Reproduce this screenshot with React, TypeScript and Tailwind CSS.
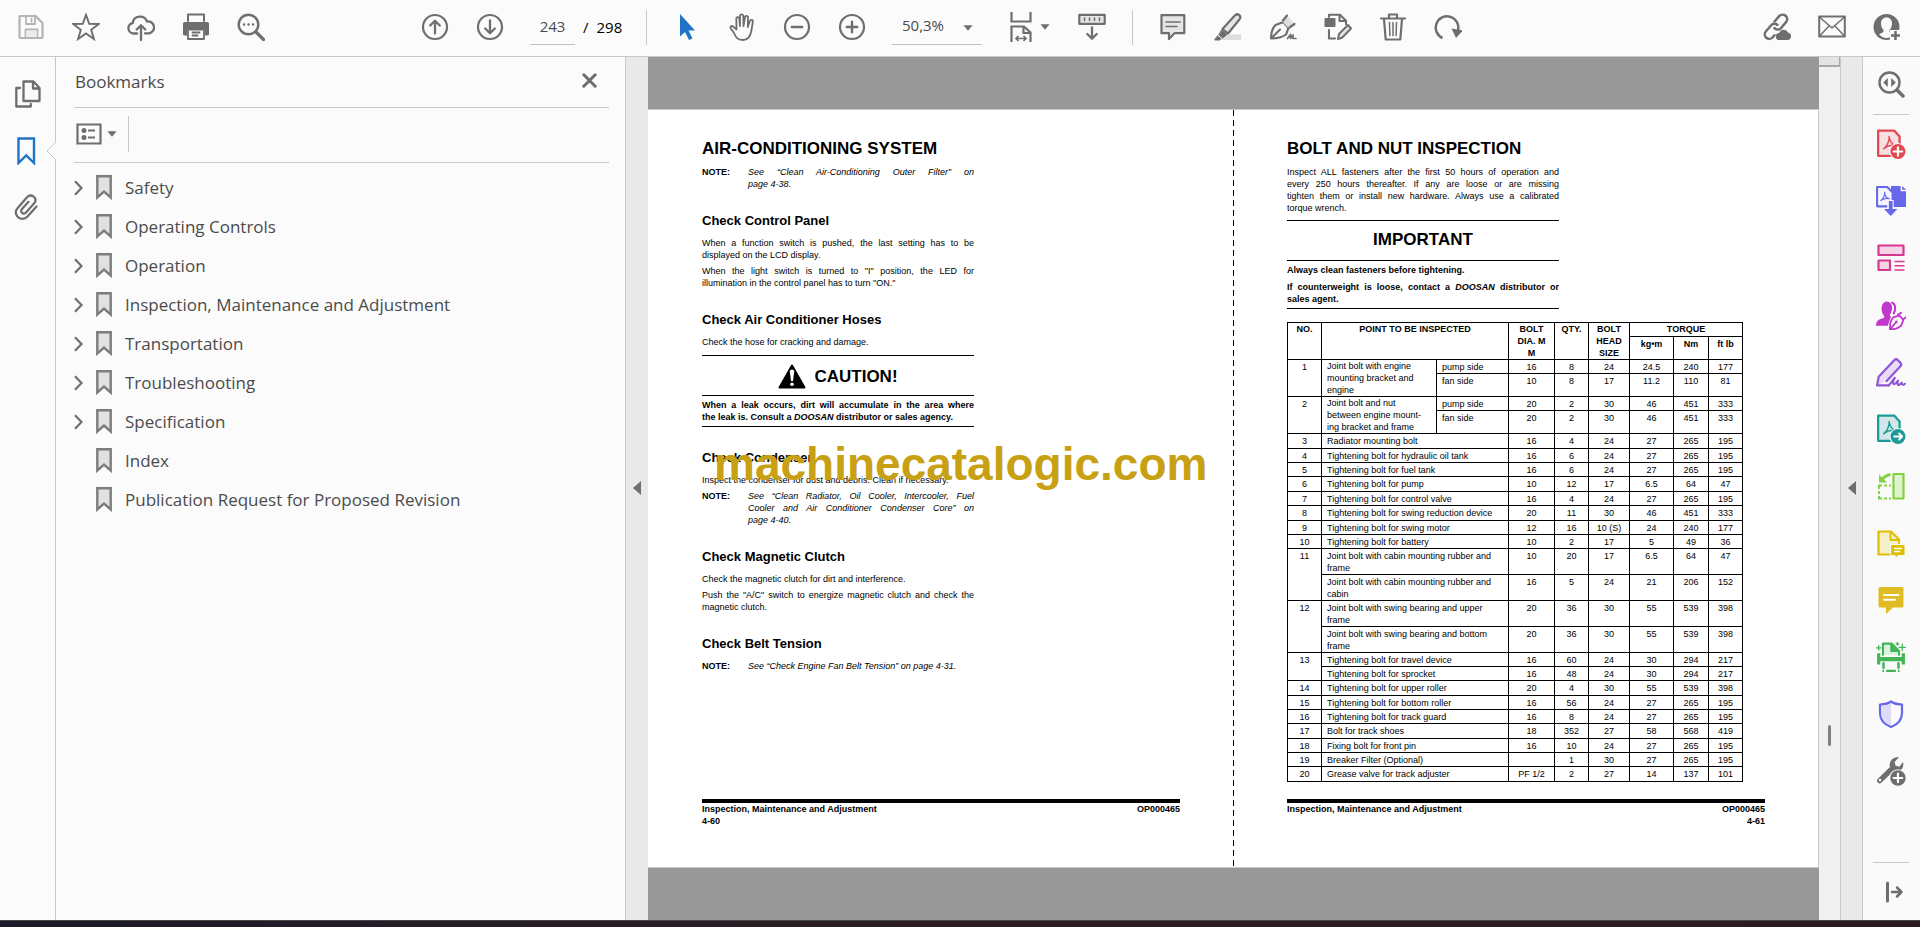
import React from 'react';
import type { ReactNode } from 'react';

type IconProps = { children: ReactNode; className?: string; size?: number };

function Icon({ children, className = 'text-[#6e6e6e]', size = 28 }: IconProps) {
  return (
    <svg
      width={size}
      height={size}
      viewBox="0 0 28 28"
      fill="none"
      stroke="currentColor"
      strokeWidth="2"
      strokeLinecap="round"
      strokeLinejoin="round"
      className={'shrink-0 ' + className}
      aria-hidden="true"
    >
      {children}
    </svg>
  );
}

/* ---------- toolbar icons ---------- */

const SaveIcon = () => (
  <Icon className="text-[#b4b4b4]">
    <path d="M3 3h15.500l7 7v14a1 1 0 0 1-1 1H3.500a1 1 0 0 1-1-1V3.500z" strokeWidth="2.200" />
    <path d="M9 3v8h9V3M14.500 5.500v3M8.500 25v-8.500h12V25" strokeWidth="1.800" />
    <path d="M9.500 17.500h10V24h-10z" fill="#ececec" stroke="none" />
  </Icon>
);
const StarIcon = () => (
  <Icon>
    <path d="M14 1.800l3.200 9 9.600.2-7.600 5.800 2.700 9.200-7.900-5.500L6.100 26l2.700-9.200L1.200 11l9.600-.2z" strokeWidth="1.900" strokeLinejoin="miter" />
  </Icon>
);
const CloudUpIcon = () => (
  <Icon>
    <path d="M10 20.500H6.500a5.300 5.300 0 0 1-.8-10.500A7.400 7.400 0 0 1 20 8.500a6 6 0 0 1 2 11.900H18" strokeWidth="2.300" />
    <path d="M14 27V12.500M9.700 16.500L14 12.200l4.300 4.300" strokeWidth="2.300" />
  </Icon>
);
const PrintIcon = () => (
  <Icon>
    <path d="M6 8V1.500h16V8" />
    <path d="M1 10.500A1.500 1.500 0 0 1 2.500 9h23a1.500 1.500 0 0 1 1.500 1.500V21a1.500 1.500 0 0 1-1.500 1.500H23V16H5v6.500H2.500A1.500 1.500 0 0 1 1 21z" fill="currentColor" stroke="none" />
    <path d="M6 16.500h16v9.500H6zM10.500 19.500h7M10.500 22.500h5" strokeWidth="1.800" />
  </Icon>
);
const FindIcon = () => (
  <Icon>
    <circle cx="11.500" cy="11.500" r="9.800" strokeWidth="2.400" />
    <path d="M19 19l7.500 7.500" strokeWidth="3.200" />
    <path d="M7 11.500h.1M11.500 11.500h.1M16 11.500h.1" strokeWidth="2.400" />
  </Icon>
);
const UpIcon = () => (
  <Icon>
    <circle cx="14" cy="14" r="12" strokeWidth="2.200" />
    <path d="M14 20.500V8M9.200 12.500L14 7.700l4.800 4.800" strokeWidth="2.300" />
  </Icon>
);
const DownIcon = () => (
  <Icon>
    <circle cx="14" cy="14" r="12" strokeWidth="2.200" />
    <path d="M14 7.500V20M9.200 15.500l4.800 4.800 4.800-4.800" strokeWidth="2.300" />
  </Icon>
);
const CursorIcon = () => (
  <Icon className="text-[#1f74c8]">
    <path d="M7 1l15 16.500h-6.500l4 8-3.500 1.500-4-8L7 23.500z" fill="currentColor" stroke="none" />
  </Icon>
);
const HandIcon = () => (
  <Icon>
    <path
      d="M8.500 16.500L8.300 5.600a1.500 1.500 0 0 1 3 0L12 13V3a1.600 1.600 0 0 1 3.300 0l.2 10L17 4.300a1.500 1.500 0 0 1 3 .3L19.800 14l2.100-6a1.500 1.500 0 0 1 2.900.8c-.4 2.900-.8 5.200-1.300 8.200C22.500 23.500 20 27 15 27c-6 0-7.500-3.500-9-7l-3.200-4.500c-1.300-2.300 1.300-3.200 2.700-1.700z"
      strokeWidth="1.800"
    />
  </Icon>
);
const MinusIcon = () => (
  <Icon>
    <circle cx="14" cy="14" r="12" strokeWidth="2.200" />
    <path d="M8.800 14h10.400" strokeWidth="2.400" />
  </Icon>
);
const PlusIcon = () => (
  <Icon>
    <circle cx="14" cy="14" r="12" strokeWidth="2.200" />
    <path d="M8.800 14h10.400M14 8.800v10.400" strokeWidth="2.400" />
  </Icon>
);
const FitIcon = () => (
  <svg width="22" height="30" viewBox="0 0 22 30" fill="none" stroke="#6e6e6e" strokeWidth="2.200" className="shrink-0" aria-hidden="true">
    <path d="M1.500 0v9.500h19V0" />
    <path d="M1.500 30V14.500H14l6.500 6V30M13.500 15v6h6.500" />
    <path d="M6 26.500h10M8.500 24L6 26.500 8.500 29M13.500 24l2.500 2.500-2.500 2.500" strokeWidth="1.700" />
  </svg>
);
const ScrollIcon = () => (
  <Icon>
    <path d="M1.300 1.800h25.400v9H1.300z" fill="#e6e6e6" strokeWidth="2.200" />
    <path d="M6.500 5v2.500M11.500 5v2.500M16.500 5v2.500M21.500 5v2.500" strokeWidth="1.600" />
    <path d="M14 14.500V25.500M9.300 21l4.700 4.700 4.700-4.700" strokeWidth="2.300" />
  </Icon>
);
const CommentIcon = () => (
  <Icon>
    <path d="M2.500 2.200h22.800v18H15.500L10 26v-5.800H2.500z" fill="#e6e6e6" strokeWidth="2.200" />
    <path d="M7 9h14M7 13.500h11" strokeWidth="1.700" />
  </Icon>
);
const HighlightIcon = () => (
  <Icon>
    <path d="M10 21.500h17V27H5z" fill="#dedede" stroke="none" />
    <path d="M8.500 16L20.800 2.600a3 3 0 0 1 4.800 3.600L14 20.500z" fill="#e6e6e6" strokeWidth="2.200" />
    <path d="M8 17l5 4.500-4.500 3.500-3.500-3zM3.800 23l2.800 2.500-.8 1.500H1z" fill="currentColor" strokeWidth="1" />
  </Icon>
);
const SignIcon = () => (
  <Icon>
    <path d="M2 25.500c0-5 1-10 4.500-13.500L14.500 9l5 6-2.500 6.500C13 24.500 7 25.500 2 25.500zM2.500 25l8.500-8.500" strokeWidth="2.100" />
    <path d="M13.500 8.500l4-6.500 8 8.500-6 4.500z" fill="#dedede" stroke="none" />
    <path d="M14 7.500l4-5M20.500 14.500L25.500 11" strokeWidth="2.200" />
    <path d="M18.500 25.500l3-4v4l2.500-3.500v3.500h3" strokeWidth="1.700" />
  </Icon>
);
const EditPdfIcon = () => (
  <Icon>
    <path d="M1.500 6h9v7h-9z" fill="currentColor" />
    <path d="M5 4V1.800h11l6 6v3.500M15.500 2v6h6M5 17v8.500h6" strokeWidth="2.100" />
    <path d="M14 26l1-5L24 12l3 3.500-9 9.300z" fill="#e6e6e6" strokeWidth="2" />
  </Icon>
);
const TrashIcon = () => (
  <Icon>
    <path d="M2 5.500h24M10 5V1.500h8V5M5 6l1.700 20.500h14.600L23 6" strokeWidth="2.200" />
    <path d="M10.500 9.500l.4 13M14 9.500v13M17.500 9.500l-.4 13" strokeWidth="1.500" />
  </Icon>
);
const RotateIcon = () => (
  <Icon>
    <path d="M8.500 25A11.300 11.300 0 1 1 24 17.500" strokeWidth="2.500" strokeLinecap="butt" />
    <path d="M17.500 15.500l11.500 2-7 7.500z" fill="currentColor" stroke="none" />
  </Icon>
);
const LinkCloudIcon = () => (
  <Icon>
    <path d="M11.500 8.500l4.700-5.300a4.500 4.500 0 0 1 6.800 6l-5.500 6.500a4.500 4.500 0 0 1-6-.5" strokeWidth="2.500" />
    <path d="M14.500 12a4.500 4.500 0 0 0-6.500.5L2.800 18.500A4.500 4.500 0 0 0 9.500 24.500l2-2.300" strokeWidth="2.500" />
    <path d="M16.500 27a3.500 3.500 0 0 1-.3-7 4.700 4.700 0 0 1 8.800-.5A3.800 3.800 0 0 1 24.800 27z" fill="currentColor" stroke="none" />
  </Icon>
);
const MailIcon = () => (
  <Icon>
    <path d="M1.200 3.500h25.600v20H1.200z" strokeWidth="2" />
    <path d="M2 4.500l12 10.500L26 4.500M2 22.500l9.300-9.700M26 22.500l-9.300-9.700" strokeWidth="1.500" />
  </Icon>
);
const AccountIcon = () => (
  <Icon>
    <circle cx="13.500" cy="14" r="13" fill="currentColor" stroke="none" />
    <path
      d="M13.500 4.500c3.500 0 5.500 2.500 5.500 6 0 2.700-1 5-2.500 6.500-.5 1.500.3 2.300 1.800 3l2.700 1.300c-2 2.400-4.500 3.700-7.500 3.700s-5.500-1.300-7.500-3.700L8.700 20c1.500-.7 2.300-1.500 1.800-3C9 15.500 8 13.200 8 10.500c0-3.500 2-6 5.500-6z"
      fill="#fbfbfb"
      stroke="none"
    />
    <path d="M17 17h11v11H17z" fill="#fbfbfb" stroke="none" />
    <path d="M22.500 18v9M18 22.500h9" strokeWidth="2.500" strokeLinecap="butt" />
  </Icon>
);

const Caret = () => (
  <svg width="10" height="6" viewBox="0 0 10 6" className="shrink-0" aria-hidden="true">
    <path d="M0.500 0.300h9L5 5.700z" fill="#6e6e6e" />
  </svg>
);

/* ---------- side rail icons ---------- */

const PagesIcon = () => (
  <Icon>
    <path d="M9.500 1.500h10l6 6.500v13h-16zM19 2v6.500h6" strokeWidth="2.300" />
    <path d="M6 8H2.300v18.500h14.500V24" strokeWidth="2.300" />
  </Icon>
);
const BookmarkIcon = () => (
  <Icon className="text-[#1f74c8]">
    <path d="M4.500 1.500h15.500v24.500l-7.750-7.500-7.750 7.500z" strokeWidth="2.400" strokeLinejoin="miter" />
  </Icon>
);
const ClipIcon = () => (
  <Icon>
    <path
      d="M22.500 12.500l-9 10a6.700 6.700 0 0 1-10.800-1c-1.500-2.600-1.200-5 .8-7.300L13 3.300c2-2 4.500-2.300 6.700-.6 2.200 1.900 2.200 4.500.5 6.600l-8.200 9.200c-1.200 1.300-2.800 1.500-4 .4-1.200-1.200-1-2.700 0-3.900l6.500-7.200"
      strokeWidth="2.200"
    />
  </Icon>
);

const AcrobatMark = () => (
  <path d="M7 18.500c3-1.500 5.500-7 5.300-11.500 0 4 3 8 6.200 8.500-3.500-.8-8 .3-11.500 3z" strokeWidth="1.300" />
);

const SearchToolIcon = () => (
  <Icon>
    <circle cx="12.500" cy="12.500" r="10" strokeWidth="2.400" />
    <path d="M20.500 20.500l5.500 5.500" strokeWidth="3.400" />
    <path d="M10.800 8v9l-4.600-4.500zM14.200 8v9l4.600-4.500z" fill="currentColor" stroke="none" />
  </Icon>
);
const CreatePdfIcon = () => (
  <Icon className="text-[#e34850]" size={30}>
    <path d="M2 1.500h15l5 5.500v18H2z" fill="#f8dfe0" strokeWidth="2.100" />
    <AcrobatMark />
    <circle cx="20.500" cy="21" r="8" fill="#fafafa" stroke="none" />
    <circle cx="20.500" cy="21" r="7" fill="currentColor" stroke="none" />
    <path d="M20.500 17v8M16.500 21h8" stroke="#fff" strokeWidth="2" />
  </Icon>
);
const ExportPdfIcon = () => (
  <Icon className="text-[#6767ec]" size={30}>
    <path d="M14 0h9v5h5v14.500H14z" fill="currentColor" stroke="none" />
    <path d="M24.500 0L28 3.500h-3.500z" fill="currentColor" stroke="none" />
    <path d="M1 1h9.500l5 5v13H1z" fill="#f4f4ff" strokeWidth="1.900" />
    <path d="M4.500 13.500c2-1 3.800-4.500 3.600-7.500 0 3 2 5.500 4.200 5.800-2.500-.5-5.500 0-7.800 1.700z" strokeWidth="1.100" />
    <path d="M10.500 13h6v8h5L13.500 29l-8-8h5z" fill="#fafafa" stroke="none" />
    <path d="M12 14h3.500v7.500H20L13.700 28l-6.200-6.500H12z" fill="currentColor" stroke="none" />
  </Icon>
);
const OrganizeIcon = () => (
  <Icon className="text-[#d83790]">
    <path d="M1.500 1.500h25V11h-25zM1.500 16.500H13V26H1.500z" fill="#f3d5e6" strokeWidth="2.200" />
    <path d="M18 17.500h9M18 21.700h9M18 26h9" strokeWidth="1.400" />
  </Icon>
);
const RequestSignIcon = () => (
  <Icon className="text-[#c038cc]" size={30}>
    <path d="M0 24c0-4 2-6 6.500-7 1.500-.4 1.600-1.500.7-2.600C4 10 4.500 2 10 1.500c5.500.3 6.300 6.500 3.500 11.500-.6 1.300-.8 2 .5 2.500L11 24z" fill="currentColor" stroke="none" />
    <path d="M15 2.500c3.500 1.500 3.500 6.500 1.500 10" strokeWidth="1.900" />
    <path d="M13 27.500c-.2-5.500 1-9.500 3.500-11.500l5.500-1.500 3.500 4-2 5.500c-3 2.500-6 3.500-10.500 3.500zm.5-.5l5-6" fill="#fafafa" strokeWidth="1.700" />
    <circle cx="19" cy="20.500" r="1.300" fill="currentColor" stroke="none" />
    <path d="M20.500 13.500l3-1.500M26 17.500l2-1.500" strokeWidth="1.700" />
  </Icon>
);
const FillSignIcon = () => (
  <Icon className="text-[#9256d9]" size={30}>
    <path d="M1 26.500l1.500-8L17 3a2.500 2.500 0 0 1 3.500 0l2.500 2.500a2.500 2.500 0 0 1 0 3L10 22.500z" fill="#e8dcf7" stroke="none" />
    <path d="M12 26.500H1l1.500-8L17 3a2.500 2.500 0 0 1 3.500 0l2.500 2.500a2.500 2.500 0 0 1 0 3L10 22.500" strokeWidth="2.100" />
    <path d="M12 26.500l5.500-7c-2.500 4-2 7.500 1 5l2-2.500c-1 3.500 0 5.500 2.500 3l1-1c0 2 1.500 2.500 3 1" strokeWidth="2" />
  </Icon>
);
const SharePdfIcon = () => (
  <Icon className="text-[#1c9a97]" size={30}>
    <path d="M2 1.500h15l5 5.500v18H2z" fill="#d2e8e8" strokeWidth="2.100" />
    <AcrobatMark />
    <circle cx="20.500" cy="21" r="8" fill="#fafafa" stroke="none" />
    <circle cx="20.500" cy="21" r="7" fill="currentColor" stroke="none" />
    <path d="M17 21h7M21.500 18l3 3-3 3" stroke="#fff" strokeWidth="1.700" />
  </Icon>
);
const CompareIcon = () => (
  <Icon className="text-[#83d143]">
    <path d="M16.500 2h10v24.500h-10z" fill="#e0f3d0" strokeWidth="2.200" />
    <path
      d="M2 17v-3.500h3M7 13.500h3M12 13.500h2M2 19v3M2 24v2.500h3M7 26.500h3M12 26.500h2"
      strokeWidth="2"
      strokeLinecap="butt"
      strokeLinejoin="miter"
    />
    <path d="M2 2.500V10.500h8z" fill="currentColor" stroke="none" />
    <path d="M5 7.500C7.500 4.500 10 3 13.500 2.500" strokeWidth="3" strokeLinecap="butt" />
  </Icon>
);
const SendCommentsIcon = () => (
  <Icon className="text-[#dfbf03]">
    <path d="M14 25.500H1.500v-23H14l8 8v3.500" fill="#f5efc8" strokeWidth="2.200" />
    <path d="M13.500 3v8h8" strokeWidth="2" />
    <path d="M14 15.500h14v11h-7L18.500 29l-.5-2.500h-4z" fill="currentColor" stroke="#fafafa" strokeWidth="1" />
    <path d="M17.500 19.500h7M17.500 22.500h5" stroke="#fff" strokeWidth="1.300" />
  </Icon>
);
const CommentToolIcon = () => (
  <Icon className="text-[#dfbb24]">
    <path d="M3 1h22a1.500 1.500 0 0 1 1.500 1.500V20a1.500 1.500 0 0 1-1.500 1.500h-9L9 28v-6.500H3A1.500 1.500 0 0 1 1.500 20V2.500A1.500 1.500 0 0 1 3 1z" fill="currentColor" stroke="none" />
    <path d="M7 9h14.500M7 13.800h11" stroke="#fff" strokeWidth="1.900" />
  </Icon>
);
const ScanIcon = () => (
  <Icon className="text-[#44b556]" size={30}>
    <path d="M6.500 12V1.500h8l7 7V12" fill="#dcf2df" strokeWidth="2" />
    <path d="M14 2v6.500h6.500" fill="#44b556" strokeWidth="1.500" />
    <path d="M1 10.500h3V14h20v-3.500h3V21h-3v-3H4v3H1z" fill="currentColor" stroke="none" />
    <path d="M7 19v6M21 19v6M9.500 27h9M6 27h1.500M20.500 27H22" strokeWidth="2.300" strokeLinecap="butt" />
    <path d="M2.500 3.500v4M.5 5.500h4M24.500 2v6M21.500 5h6M20 .5v2.500M18.800 1.700h2.500" strokeWidth="1.200" />
  </Icon>
);
const ShieldIcon = () => (
  <Icon className="text-[#6767ec]">
    <path d="M14 1.500c3.500 2.500 7 3 11 3V13c0 7-4.500 11.500-11 14C7.500 24.500 3 20 3 13V4.500c4 0 7.500-.5 11-3z" strokeWidth="2.200" />
    <path d="M14 3.200v22.300C8.300 23 4.300 19 4.300 13V5.700C8 5.600 11 5 14 3.200z" fill="#dcdcf8" stroke="none" />
  </Icon>
);
const MoreToolsIcon = () => (
  <Icon size={30}>
    <path d="M3.500 23L16 11" strokeWidth="5" />
    <path d="M21.500 1.200l-4.200 4.300 1 3.500 3.500 1 3.400-4.300c1.300 4.500-1.500 8.500-6 8.300-5 0-7.300-3.500-6.200-7.500 1-3.800 4.500-6 8.500-5.300z" fill="currentColor" stroke="none" />
    <circle cx="3.800" cy="22.500" r="1.200" fill="#fafafa" stroke="none" />
    <circle cx="20.500" cy="20.500" r="8.200" fill="#fafafa" stroke="none" />
    <circle cx="20.500" cy="20.500" r="7.200" fill="currentColor" stroke="none" />
    <path d="M20.500 16.500v8M16.500 20.500h8" stroke="#fff" strokeWidth="2" />
  </Icon>
);
const CollapseIcon = () => (
  <Icon>
    <path d="M10.500 5v18" strokeWidth="3" />
    <path d="M15 14h9M20 9.500l4.500 4.500-4.500 4.500" strokeWidth="2.500" />
  </Icon>
);

/* ---------- building blocks ---------- */

function ToolButton({ label, children }: { label: string; children: ReactNode }) {
  return (
    <button type="button" aria-label={label} className="flex h-11 w-[55px] shrink-0 items-center justify-center">
      {children}
    </button>
  );
}

function RailButton({ label, children }: { label: string; children: ReactNode }) {
  return (
    <button type="button" aria-label={label} className="flex h-[57px] w-full shrink-0 items-center justify-center">
      {children}
    </button>
  );
}

function Toolbar() {
  return (
    <header className="flex h-[57px] shrink-0 items-start border-b border-[#c8c8c8] bg-[#fbfbfb] pt-[5px] pr-1.5 pl-[3px] font-['Open_Sans','Noto_Sans',sans-serif] text-[15px]">
      <ToolButton label="Save"><SaveIcon /></ToolButton>
      <ToolButton label="Star"><StarIcon /></ToolButton>
      <ToolButton label="Upload"><CloudUpIcon /></ToolButton>
      <ToolButton label="Print"><PrintIcon /></ToolButton>
      <ToolButton label="Find"><FindIcon /></ToolButton>
      <div className="w-[129px] shrink-0" />
      <ToolButton label="Previous page"><UpIcon /></ToolButton>
      <ToolButton label="Next page"><DownIcon /></ToolButton>
      <input
        aria-label="Page number"
        defaultValue="243"
        className="ml-[13px] h-10 w-[45px] shrink-0 border-b border-[#c0c0c0] bg-transparent pt-0.5 text-center text-[#4b4b4b] outline-none"
      />
      <span className="ml-2 flex h-11 w-[63px] shrink-0 items-center gap-2 text-black">
        <span>/</span>
        <span>298</span>
      </span>
      <div className="mt-[5px] h-[35px] w-px shrink-0 bg-[#c8c8c8]" />
      <div className="w-3 shrink-0" />
      <ToolButton label="Select"><CursorIcon /></ToolButton>
      <ToolButton label="Pan"><HandIcon /></ToolButton>
      <ToolButton label="Zoom out"><MinusIcon /></ToolButton>
      <ToolButton label="Zoom in"><PlusIcon /></ToolButton>
      <div className="relative ml-[13px] h-10 w-[90px] shrink-0 border-b border-[#c0c0c0]">
        <select aria-label="Zoom level" className="h-full w-full appearance-none bg-transparent pt-0.5 pl-2.5 text-[#4b4b4b] outline-none">
          <option>50,3%</option>
        </select>
        <span className="pointer-events-none absolute top-[20px] right-[9px]">
          <Caret />
        </span>
      </div>
      <button type="button" aria-label="Fit page" className="flex h-11 w-[82px] shrink-0 items-center gap-2 pl-7">
        <FitIcon />
        <Caret />
      </button>
      <ToolButton label="Scrolling mode"><ScrollIcon /></ToolButton>
      <div className="mt-[5px] ml-[13px] h-[35px] w-px shrink-0 bg-[#c8c8c8]" />
      <div className="w-3 shrink-0" />
      <ToolButton label="Comment"><CommentIcon /></ToolButton>
      <ToolButton label="Highlight"><HighlightIcon /></ToolButton>
      <ToolButton label="Sign"><SignIcon /></ToolButton>
      <ToolButton label="Edit"><EditPdfIcon /></ToolButton>
      <ToolButton label="Delete"><TrashIcon /></ToolButton>
      <ToolButton label="Rotate"><RotateIcon /></ToolButton>
      <div className="ml-auto flex">
        <ToolButton label="Share link"><LinkCloudIcon /></ToolButton>
        <ToolButton label="Send by email"><MailIcon /></ToolButton>
        <ToolButton label="Account"><AccountIcon /></ToolButton>
      </div>
    </header>
  );
}

const bookmarks = [
  { title: 'Safety', open: true },
  { title: 'Operating Controls', open: true },
  { title: 'Operation', open: true },
  { title: 'Inspection, Maintenance and Adjustment', open: true },
  { title: 'Transportation', open: true },
  { title: 'Troubleshooting', open: true },
  { title: 'Specification', open: true },
  { title: 'Index', open: false },
  { title: 'Publication Request for Proposed Revision', open: false },
];

function LeftRail() {
  return (
    <nav className="relative flex w-14 shrink-0 flex-col border-r border-[#c8c8c8] bg-[#fbfbfb] pt-2">
      <RailButton label="Page thumbnails"><PagesIcon /></RailButton>
      <RailButton label="Bookmarks"><BookmarkIcon /></RailButton>
      <RailButton label="Attachments"><ClipIcon /></RailButton>
      <svg className="absolute top-[84px] -right-px" width="10" height="20" viewBox="0 0 10 20" aria-hidden="true">
        <path d="M10 1v18L1 10z" fill="#fbfbfb" />
        <path d="M9.500 0.500v1L1 10l8.500 8.500v1" fill="none" stroke="#c8c8c8" />
      </svg>
    </nav>
  );
}

function BookmarksPanel() {
  return (
    <aside className="flex w-[570px] shrink-0 flex-col border-r border-[#c8c8c8] bg-[#fbfbfb] pr-4 pl-[18px] font-['Open_Sans','Noto_Sans',sans-serif] text-[17px] text-[#4b4b4b]">
      <div className="flex h-[51px] items-start justify-between border-b border-[#c8c8c8] pt-[13px] pr-3 pl-px">
        <h1 className="leading-6">Bookmarks</h1>
        <button type="button" aria-label="Close" className="pt-[3px]">
          <svg width="15" height="15" viewBox="0 0 15 15" stroke="#6e6e6e" strokeWidth="3" strokeLinecap="round" aria-hidden="true">
            <path d="M1.800 1.800l11.400 11.400M13.200 1.800L1.800 13.200" />
          </svg>
        </button>
      </div>
      <div className="flex h-[55px] items-start border-b border-[#c8c8c8] pt-2">
        <button type="button" aria-label="Options" className="flex h-9 w-[55px] items-center gap-[5px] border-r border-[#c8c8c8] pl-0.5">
          <svg width="26" height="22" viewBox="0 0 26 22" fill="none" stroke="#6e6e6e" aria-hidden="true">
            <path d="M1.500 1.500h23v19h-23z" strokeWidth="2.200" />
            <path d="M12 7.500h7M12 14.500h7" strokeWidth="2" />
            <circle cx="8" cy="7.500" r="2.500" fill="#6e6e6e" stroke="none" />
            <circle cx="8" cy="14.500" r="2.500" fill="#6e6e6e" stroke="none" />
          </svg>
          <Caret />
        </button>
      </div>
      <ul className="pt-[5px]">
        {bookmarks.map((b) => (
          <li key={b.title} className="flex h-[39px] items-center">
            <span className="flex w-[22px] shrink-0">
              {b.open && (
                <svg width="9" height="16" viewBox="0 0 9 16" fill="none" stroke="#6e6e6e" strokeWidth="2.200" aria-hidden="true">
                  <path d="M1 1.200L7.500 8 1 14.800" />
                </svg>
              )}
            </span>
            <svg width="16" height="25" viewBox="0 0 16 25" fill="#e1e1e1" stroke="#7c7c7c" strokeWidth="2.400" className="shrink-0" aria-hidden="true">
              <path d="M1.300 1.300h13.400v21.200L8 16.500l-6.700 6z" />
            </svg>
            <a href="#bookmark" className="ml-[13px]">{b.title}</a>
          </li>
        ))}
      </ul>
    </aside>
  );
}

function Lines({ rows, className = '' }: { rows: string[]; className?: string }) {
  return (
    <p className={className}>
      {rows.map((r, i) => (
        <span key={r} className={'block whitespace-nowrap ' + (i < rows.length - 1 ? '[text-align-last:justify]' : '')}>
          {r}
        </span>
      ))}
    </p>
  );
}

function Note({ rows }: { rows: string[] }) {
  return (
    <div className="flex">
      <strong className="w-[46px] shrink-0">NOTE:</strong>
      <Lines rows={rows} className="flex-1 italic" />
    </div>
  );
}

function Section({ title, children }: { title: string; children: ReactNode }) {
  return (
    <section className="mt-[21px]">
      <h3 className="mb-1.5 text-[13px] leading-5 font-bold">{title}</h3>
      <div className="flex flex-col gap-1">{children}</div>
    </section>
  );
}

function Footer({ number, right }: { number: string; right?: boolean }) {
  return (
    <footer className="mt-auto border-t-4 border-black font-bold">
      <div className="flex justify-between">
        <span>Inspection, Maintenance and Adjustment</span>
        <span>OP000465</span>
      </div>
      <div className={right ? 'text-right' : ''}>{number}</div>
    </footer>
  );
}

function LeftPage() {
  return (
    <article className="flex flex-col pt-[27px] pr-[53px] pb-10 pl-[54px]">
      <div className="w-[272px]">
        <h2 className="mb-[5px] text-[17px] leading-6 font-bold whitespace-nowrap">AIR-CONDITIONING SYSTEM</h2>
        <Note rows={['See “Clean Air-Conditioning Outer Filter” on', 'page 4-38.']} />
        <Section title="Check Control Panel">
          <Lines rows={['When a function switch is pushed, the last setting has to be', 'displayed on the LCD display.']} />
          <Lines rows={['When the light switch is turned to "I" position, the LED for', 'illumination in the control panel has to turn "ON."']} />
        </Section>
        <Section title="Check Air Conditioner Hoses">
          <p>Check the hose for cracking and damage.</p>
        </Section>
        <div className="mt-[7px] border-b border-black pb-[3px] font-bold">
          <div className="flex h-[41px] items-center justify-center gap-2 border-y border-black pt-0.5 text-[17px]">
            <svg width="28" height="25" viewBox="0 0 28 25" aria-hidden="true">
              <path d="M14 1.500L26.500 23.500h-25z" stroke="#000" strokeWidth="2" strokeLinejoin="round" />
              <path d="M11.800 7.500c0-2.800 4.400-2.800 4.400 0L15 17h-2z" fill="#fff" />
              <circle cx="14" cy="20.300" r="1.800" fill="#fff" />
            </svg>
            CAUTION!
          </div>
          <div className="pt-[3px] whitespace-nowrap">
            <p className="[text-align-last:justify]">When a leak occurs, dirt will accumulate in the area where</p>
            <p>
              the leak is. Consult a <em>DOOSAN</em> distributor or sales agency.
            </p>
          </div>
        </div>
        <Section title="Check Condenser">
          <p>Inspect the condenser for dust and debris. Clean if necessary.</p>
          <Note
            rows={[
              'See “Clean Radiator, Oil Cooler, Intercooler, Fuel',
              'Cooler and Air Conditioner Condenser Core” on',
              'page 4-40.',
            ]}
          />
        </Section>
        <Section title="Check Magnetic Clutch">
          <p>Check the magnetic clutch for dirt and interference.</p>
          <Lines rows={['Push the "A/C" switch to energize magnetic clutch and check the', 'magnetic clutch.']} />
        </Section>
        <Section title="Check Belt Tension">
          <Note rows={['See “Check Engine Fan Belt Tension” on page 4-31.']} />
        </Section>
      </div>
      <Footer number="4-60" />
    </article>
  );
}

type Row = {
  no?: string;
  noSpan?: number;
  point?: string[];
  pointSpan?: number;
  side?: string;
  values: string[];
  height: string;
};

const H14 = 'h-[14px]';
const H15 = 'h-[15px]';
const H23 = 'h-[23px]';
const H26 = 'h-[26px]';

const rows: Row[] = [
  { no: '1', noSpan: 2, point: ['Joint bolt with engine', 'mounting bracket and', 'engine'], pointSpan: 2, side: 'pump side', values: ['16', '8', '24', '24.5', '240', '177'], height: H14 },
  { side: 'fan side', values: ['10', '8', '17', '11.2', '110', '81'], height: H23 },
  { no: '2', noSpan: 2, point: ['Joint bolt and nut', 'between engine mount-', 'ing bracket and frame'], pointSpan: 2, side: 'pump side', values: ['20', '2', '30', '46', '451', '333'], height: H14 },
  { side: 'fan side', values: ['20', '2', '30', '46', '451', '333'], height: H23 },
  { no: '3', point: ['Radiator mounting bolt'], values: ['16', '4', '24', '27', '265', '195'], height: H15 },
  { no: '4', point: ['Tightening bolt for hydraulic oil tank'], values: ['16', '6', '24', '27', '265', '195'], height: H14 },
  { no: '5', point: ['Tightening bolt for fuel tank'], values: ['16', '6', '24', '27', '265', '195'], height: H14 },
  { no: '6', point: ['Tightening bolt for pump'], values: ['10', '12', '17', '6.5', '64', '47'], height: H15 },
  { no: '7', point: ['Tightening bolt for control valve'], values: ['16', '4', '24', '27', '265', '195'], height: H14 },
  { no: '8', point: ['Tightening bolt for swing reduction device'], values: ['20', '11', '30', '46', '451', '333'], height: H15 },
  { no: '9', point: ['Tightening bolt for swing motor'], values: ['12', '16', '10 (S)', '24', '240', '177'], height: H14 },
  { no: '10', point: ['Tightening bolt for battery'], values: ['10', '2', '17', '5', '49', '36'], height: H14 },
  { no: '11', noSpan: 2, point: ['Joint bolt with cabin mounting rubber and', 'frame'], values: ['10', '20', '17', '6.5', '64', '47'], height: H26 },
  { point: ['Joint bolt with cabin mounting rubber and', 'cabin'], values: ['16', '5', '24', '21', '206', '152'], height: H26 },
  { no: '12', noSpan: 2, point: ['Joint bolt with swing bearing and upper', 'frame'], values: ['20', '36', '30', '55', '539', '398'], height: H26 },
  { point: ['Joint bolt with swing bearing and bottom', 'frame'], values: ['20', '36', '30', '55', '539', '398'], height: H26 },
  { no: '13', noSpan: 2, point: ['Tightening bolt for travel device'], values: ['16', '60', '24', '30', '294', '217'], height: H14 },
  { point: ['Tightening bolt for sprocket'], values: ['16', '48', '24', '30', '294', '217'], height: H14 },
  { no: '14', point: ['Tightening bolt for upper roller'], values: ['20', '4', '30', '55', '539', '398'], height: H15 },
  { no: '15', point: ['Tightening bolt for bottom roller'], values: ['16', '56', '24', '27', '265', '195'], height: H14 },
  { no: '16', point: ['Tightening bolt for track guard'], values: ['16', '8', '24', '27', '265', '195'], height: H14 },
  { no: '17', point: ['Bolt for track shoes'], values: ['18', '352', '27', '58', '568', '419'], height: H15 },
  { no: '18', point: ['Fixing bolt for front pin'], values: ['16', '10', '24', '27', '265', '195'], height: H14 },
  { no: '19', point: ['Breaker Filter (Optional)'], values: ['', '1', '30', '27', '265', '195'], height: H14 },
  { no: '20', point: ['Grease valve for track adjuster'], values: ['PF 1/2', '2', '27', '14', '137', '101'], height: H15 },
];

const edge = 'border-r border-b border-black align-top';
const cell = edge + ' px-0 pt-px pb-0';
const head = edge + ' p-0 font-bold';
const subhead = edge + ' px-0 pt-px pb-0 font-bold';

function TorqueTable() {
  return (
    <table className="mt-[13px] w-[456px] table-fixed border-separate border-spacing-0 border-t border-l border-black text-center whitespace-nowrap">
      <colgroup>
        <col className="w-[34px]" />
        <col className="w-[115px]" />
        <col className="w-[72px]" />
        <col className="w-[46px]" />
        <col className="w-[34px]" />
        <col className="w-[41px]" />
        <col className="w-[44px]" />
        <col className="w-[35px]" />
        <col className="w-[34px]" />
      </colgroup>
      <thead>
        <tr className="h-[14px]">
          <th rowSpan={2} className={head}>NO.</th>
          <th rowSpan={2} colSpan={2} className={head}>POINT TO BE INSPECTED</th>
          <th rowSpan={2} className={head}>BOLT<br />DIA. M<br />M</th>
          <th rowSpan={2} className={head}>QTY.</th>
          <th rowSpan={2} className={head}>BOLT<br />HEAD<br />SIZE</th>
          <th colSpan={3} className={head}>TORQUE</th>
        </tr>
        <tr className="h-[23px]">
          <th className={subhead}>kg•m</th>
          <th className={subhead}>Nm</th>
          <th className={subhead}>ft lb</th>
        </tr>
      </thead>
      <tbody>
        {rows.map((r, i) => (
          <tr key={i} className={r.height}>
            {r.no && <td rowSpan={r.noSpan ?? 1} className={cell}>{r.no}</td>}
            {r.point && (
              <td
                rowSpan={r.pointSpan ?? 1}
                colSpan={r.side ? 1 : 2}
                className={edge + ' pr-0 pb-0 pl-[5px] text-left ' + (r.side ? 'pt-0' : 'pt-px')}
              >
                {r.point.map((line) => (
                  <span key={line} className="block">{line}</span>
                ))}
              </td>
            )}
            {r.side && <td className={edge + ' pt-px pr-0 pb-0 pl-[5px] text-left'}>{r.side}</td>}
            {r.values.map((v, j) => (
              <td key={j} className={cell}>{v}</td>
            ))}
          </tr>
        ))}
      </tbody>
    </table>
  );
}

function RightPage() {
  return (
    <article className="flex flex-col bg-[linear-gradient(#000_60%,#fff_60%)] bg-[length:1px_10px] bg-repeat-y pt-[27px] pr-[53px] pb-10 pl-[54px]">
      <div className="w-[272px]">
        <h2 className="mb-[5px] text-[17px] leading-6 font-bold whitespace-nowrap">BOLT AND NUT INSPECTION</h2>
        <Lines
          rows={[
            'Inspect ALL fasteners after the first 50 hours of operation and',
            'every 250 hours thereafter. If any are loose or are missing',
            'tighten them or install new hardware. Always use a calibrated',
            'torque wrench.',
          ]}
        />
        <div className="mt-1.5 border-b border-black pb-[3px] font-bold">
          <div className="flex h-[41px] items-center justify-center border-y border-black pb-px text-[17px]">IMPORTANT</div>
          <div className="pt-[3px] whitespace-nowrap">
            <p className="mb-[5px]">Always clean fasteners before tightening.</p>
            <p className="[text-align-last:justify]">
              If counterweight is loose, contact a <em>DOOSAN</em> distributor or
            </p>
            <p>sales agent.</p>
          </div>
        </div>
      </div>
      <TorqueTable />
      <Footer number="4-61" right />
    </article>
  );
}

function Gutter({ label, className }: { label: string; className: string }) {
  return (
    <button type="button" aria-label={label} className={'flex shrink-0 items-center justify-center bg-[#e9e9e9] pb-0.5 ' + className}>
      <svg width="8" height="14" viewBox="0 0 8 14" aria-hidden="true">
        <path d="M8 0v14L0 7z" fill="#6e6e6e" />
      </svg>
    </button>
  );
}

function RightRail() {
  return (
    <nav className="flex min-h-0 w-[57px] shrink-0 flex-col items-center bg-[#fafafa] pr-px">
      <button type="button" aria-label="Search tools" className="flex h-[57px] w-full shrink-0 items-center justify-center pb-[3px]">
        <SearchToolIcon />
      </button>
      <hr className="w-9 shrink-0 border-[#c8c8c8]" />
      <RailButton label="Create PDF"><CreatePdfIcon /></RailButton>
      <RailButton label="Export PDF"><ExportPdfIcon /></RailButton>
      <RailButton label="Organize pages"><OrganizeIcon /></RailButton>
      <RailButton label="Request signatures"><RequestSignIcon /></RailButton>
      <RailButton label="Fill and sign"><FillSignIcon /></RailButton>
      <RailButton label="Share"><SharePdfIcon /></RailButton>
      <RailButton label="Compare files"><CompareIcon /></RailButton>
      <RailButton label="Send for comments"><SendCommentsIcon /></RailButton>
      <RailButton label="Comment"><CommentToolIcon /></RailButton>
      <RailButton label="Scan"><ScanIcon /></RailButton>
      <RailButton label="Protect"><ShieldIcon /></RailButton>
      <RailButton label="More tools"><MoreToolsIcon /></RailButton>
      <hr className="mt-auto w-9 shrink-0 border-[#c8c8c8]" />
      <RailButton label="Collapse pane"><CollapseIcon /></RailButton>
    </nav>
  );
}

export default function App() {
  return (
    <div className="flex h-screen flex-col overflow-hidden bg-[#fbfbfb]">
      <Toolbar />
      <div className="flex min-h-0 flex-1">
        <LeftRail />
        <BookmarksPanel />
        <Gutter label="Collapse bookmarks" className="w-[22px]" />
        <main className="flex min-w-0 flex-1 flex-col bg-[#989898] py-[52px]">
          <div className="relative grid flex-1 grid-cols-2 border-y border-r border-[#c8c8c8] bg-white font-['Liberation_Sans',Arial,sans-serif] text-[9px] leading-3 text-black">
            <LeftPage />
            <RightPage />
            <div className="pointer-events-none absolute top-[328px] left-[66px] text-[46px] leading-[52px] font-bold text-[#c8a014]">
              machinecatalogic.com
            </div>
          </div>
        </main>
        <div className="relative flex w-[22px] shrink-0 flex-col items-center border-r border-[#c8c8c8] bg-[#f0f0f0]">
          <div className="h-[10px] w-full border-r border-b-2 border-[#a8a8a8] bg-[#e3e3e3]" />
          <div className="absolute top-[668px] h-[21px] w-[3px] rounded-full bg-[#808080]" />
        </div>
        <Gutter label="Expand tools" className="w-[22px] border-r border-[#c8c8c8]" />
        <RightRail />
      </div>
      <div className="h-[7px] shrink-0 border-t border-[#4a4446] bg-linear-to-r from-[#1c1a28] via-[#2c1e22] to-[#2a1c1e]" />
    </div>
  );
}
